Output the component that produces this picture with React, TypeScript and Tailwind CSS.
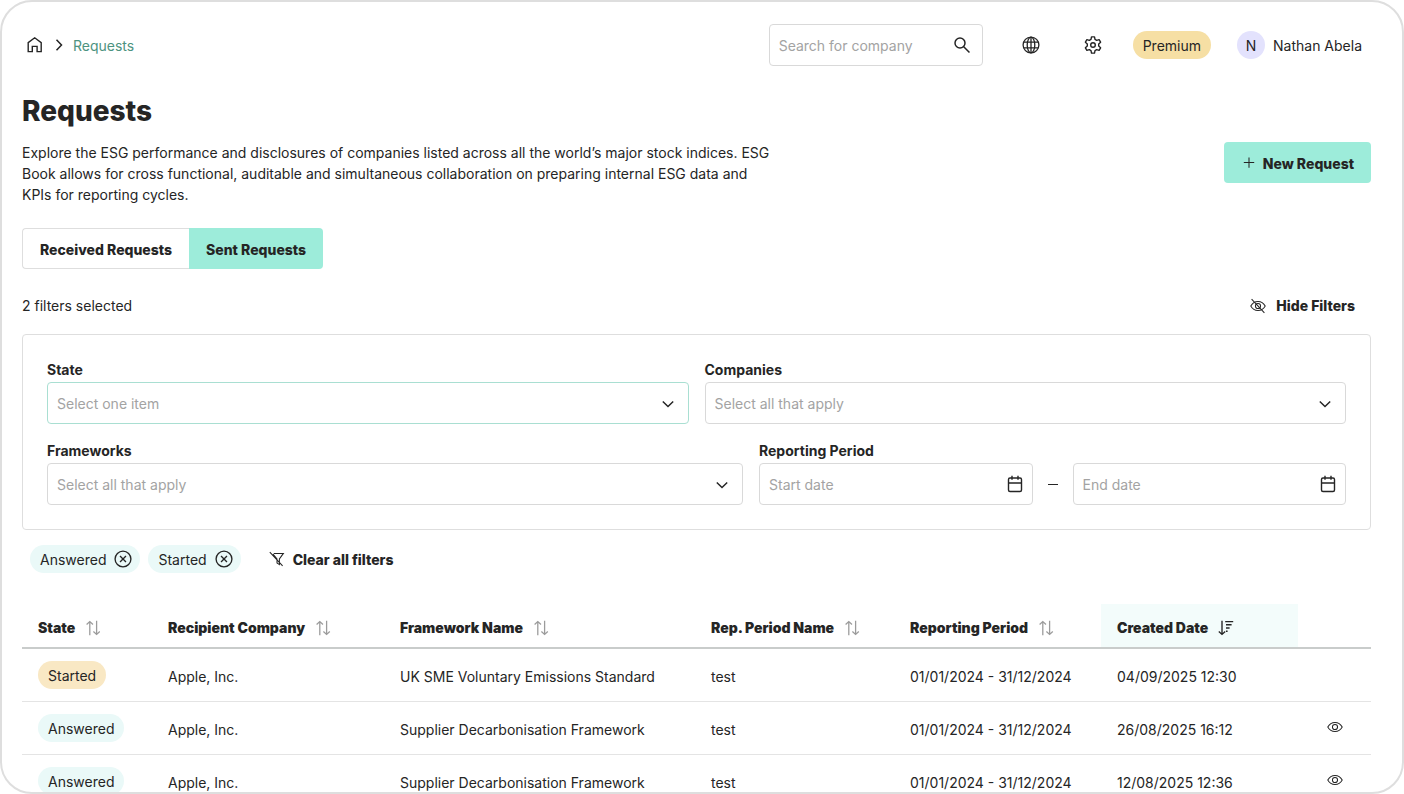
import type { ReactNode } from "react";
import clsx from "clsx";

type IconProps = { className?: string; size?: number; stroke?: number; children?: ReactNode };

function Icon({ className, size = 20, stroke = 1.3, children }: IconProps) {
  return (
    <svg
      className={clsx("shrink-0", className)}
      width={size}
      height={size}
      viewBox="0 0 20 20"
      fill="none"
      stroke="currentColor"
      strokeWidth={stroke}
      aria-hidden="true"
    >
      {children}
    </svg>
  );
}

function HomeIcon() {
  return (
    <Icon stroke={1.4}>
      <path d="M3.2 7.6 9.7 2.8l6.5 4.8v9h-4.1v-5.2H7.3v5.2H3.2z" />
    </Icon>
  );
}

function ChevronIcon({ className }: { className?: string }) {
  return (
    <Icon className={className} stroke={1.5}>
      <path d="m4.8 7.5 5.2 5 5.2-5" />
    </Icon>
  );
}

function GearIcon() {
  return (
    <Icon stroke={1.4}>
      <path
        strokeLinejoin="round"
        d="M8.5 1.9h3l.5 2.5 1.7 1 2.4-.8 1.5 2.6-1.9 1.7v2.2l1.9 1.7-1.5 2.6-2.4-.8-1.7 1-.5 2.5h-3L8 15.6l-1.700-1-2.400.8-1.500-2.600 1.900-1.700V8.900L2.400 7.200l1.500-2.600 2.400.8 1.700-1z"
      />
      <circle cx="10" cy="10" r="2.3" />
    </Icon>
  );
}

function GlobeIcon() {
  return (
    <Icon>
      <circle cx="10" cy="10" r="7.9" />
      <ellipse cx="10" cy="10" rx="3.8" ry="7.9" />
      <path d="M10 2v16M2.8 7.2h14.4M2.8 12.8h14.4" />
    </Icon>
  );
}

function CalendarIcon() {
  return (
    <Icon stroke={1.4}>
      <rect x="3.5" y="4" width="13" height="13.5" rx="1.5" />
      <path d="M3.5 9h13M7 1.8v4M13 1.8v4" />
    </Icon>
  );
}

function EyeIcon({ off = false }: { off?: boolean }) {
  return (
    <Icon size={16} stroke={1.3}>
      <path d="M1 10C3 6.3 6.2 4.3 10 4.3S17 6.3 19 10c-2 3.7-5.2 5.7-9 5.7S3 13.7 1 10z" />
      <circle cx="10" cy="10" r="3.2" />
      {off && <path d="m2 1.5 16 17" />}
    </Icon>
  );
}

function SortIcon() {
  return (
    <Icon size={16} className="text-[#9b9b9b]" stroke={1.6}>
      <path d="M6 19V2M2 5.5 6 2l4 3.5M14.500 1v17M10.500 14.500l4 3.500 4-3.500" />
    </Icon>
  );
}

function SortDescIcon() {
  return (
    <Icon size={16} stroke={1.7}>
      <path d="M5 1v17M1 14.5 5 18l4-3.5M9 2h10M10 6h7M10 10h4.5M10 14h2" />
    </Icon>
  );
}

type FieldProps = { id: string; label: string; placeholder: string; active?: boolean };

function SelectField({ id, label, placeholder, active }: FieldProps) {
  return (
    <div className="flex flex-1 flex-col">
      <label htmlFor={id} className="font-bold leading-6">{label}</label>
      <div className="relative">
        <select
          id={id}
          defaultValue=""
          className={clsx(
            "h-[42px] w-full appearance-none rounded border bg-white pl-[9px] pr-10 pt-[2px] text-[#a3a3a3]",
            active ? "border-[#a9dfd2]" : "border-[#d9d9d9]"
          )}
        >
          <option value="">{placeholder}</option>
        </select>
        <ChevronIcon className="pointer-events-none absolute right-[11px] top-3" />
      </div>
    </div>
  );
}

function DateField({ id, label, placeholder }: FieldProps) {
  return (
    <div className="flex h-[42px] min-w-0 flex-1 items-center rounded border border-[#d9d9d9] pl-[9px] pr-[7px]">
      <input
        id={id}
        aria-label={label}
        placeholder={placeholder}
        className="w-full min-w-0 pt-[2px] outline-none placeholder:text-[#a3a3a3]"
      />
      <CalendarIcon />
    </div>
  );
}

function FilterChip({ label }: { label: string }) {
  return (
    <span className="flex h-7 items-center gap-2 rounded-full bg-[#eaf9f8] pl-[10px] pr-2">
      <span className="pt-[2px]">{label}</span>
      <button type="button" aria-label={`Remove ${label}`}>
        <Icon size={18} stroke={1.5}>
          <circle cx="10" cy="10" r="8.8" />
          <path d="m6.7 6.7 6.6 6.6M13.3 6.7l-6.6 6.6" />
        </Icon>
      </button>
    </span>
  );
}

const columns = [
  { name: "State", width: "w-[130px]" },
  { name: "Recipient Company", width: "w-[232px]" },
  { name: "Framework Name", width: "w-[311px]" },
  { name: "Rep. Period Name", width: "w-[199px]" },
  { name: "Reporting Period", width: "w-[207px]" },
  { name: "Created Date", width: "w-[197px]", sorted: true },
];

const rows = [
  { state: "Started", framework: "UK SME Voluntary Emissions Standard", created: "04/09/2025 12:30" },
  { state: "Answered", framework: "Supplier Decarbonisation Framework", created: "26/08/2025 16:12", viewable: true },
  { state: "Answered", framework: "Supplier Decarbonisation Framework", created: "12/08/2025 12:36", viewable: true },
];

function TopBar() {
  return (
    <header className="flex h-[42px] items-center justify-between">
      <nav aria-label="Breadcrumb" className="flex items-center gap-1 pl-[3px]">
        <a href="#home" aria-label="Home"><HomeIcon /></a>
        <ChevronIcon className="-rotate-90" />
        <a href="#requests" className="pt-[2px] text-[#4d9380]">Requests</a>
      </nav>

      <div className="flex items-center">
        <div className="flex h-[42px] w-[214px] items-center rounded border border-[#d9d9d9] pl-[9px] pr-[10px]">
          <input
            aria-label="Search for company"
            placeholder="Search for company"
            className="w-full min-w-0 pt-[2px] outline-none placeholder:text-[#a3a3a3]"
          />
          <Icon stroke={1.5}>
            <circle cx="8" cy="8" r="5" />
            <path d="m11.500 11.500 6 6" />
          </Icon>
        </div>
        <button type="button" aria-label="Language" className="ml-[38px]"><GlobeIcon /></button>
        <button type="button" aria-label="Settings" className="ml-[42px]"><GearIcon /></button>
        <span className="ml-[30px] flex h-7 items-center rounded-full bg-[#f6dfa4] px-[10px] pt-[2px]">Premium</span>
        <button type="button" className="ml-[26px] flex items-center gap-2">
          <span className="flex size-7 items-center justify-center rounded-full bg-[#e3e2fd] pt-[2px]">N</span>
          <span className="pt-[2px]">Nathan Abela</span>
        </button>
      </div>
    </header>
  );
}

function Filters() {
  return (
    <section className="rounded border border-[#dedede] p-6 pt-[23px]">
      <div className="flex gap-4">
        <SelectField id="state" label="State" placeholder="Select one item" active />
        <SelectField id="companies" label="Companies" placeholder="Select all that apply" />
      </div>
      <div className="mt-[15px] flex gap-4">
        <div className="flex w-[696px] max-w-[54%]">
          <SelectField id="frameworks" label="Frameworks" placeholder="Select all that apply" />
        </div>
        <fieldset className="min-w-0 flex-1">
          <legend className="font-bold leading-6">Reporting Period</legend>
          <div className="flex items-center">
            <DateField id="start" label="Start date" placeholder="Start date" />
            <span className="mx-[15px] h-px w-[10px] bg-[#252525]" />
            <DateField id="end" label="End date" placeholder="End date" />
          </div>
        </fieldset>
      </div>
    </section>
  );
}

function RequestsTable() {
  return (
    <table className="w-full table-fixed border-collapse text-left">
      <thead>
        <tr className="h-11 border-b-2 border-[#c9cccb]">
          {columns.map((col) => (
            <th key={col.name} className={clsx("px-4 pt-1", col.width, col.sorted && "bg-[#f3fcfb]")}>
              <button type="button" className="flex items-center gap-[10px] whitespace-nowrap font-black">
                {col.name}
                {col.sorted ? <SortDescIcon /> : <SortIcon />}
              </button>
            </th>
          ))}
          <th aria-label="Actions" />
        </tr>
      </thead>
      <tbody>
        {rows.map((row) => (
          <tr key={row.created} className="h-[53px] border-b border-[#e4e4e4]">
            <td className="px-4">
              <span
                className={clsx(
                  "inline-flex h-7 items-center rounded-full px-[10px] pt-[2px]",
                  row.state === "Started" ? "bg-[#f9e8c4]" : "bg-[#eaf9f8]"
                )}
              >
                {row.state}
              </span>
            </td>
            <td className="px-4 pt-1">Apple, Inc.</td>
            <td className="whitespace-nowrap px-4 pt-1">{row.framework}</td>
            <td className="px-4 pt-1">test</td>
            <td className="whitespace-nowrap px-4 pt-1">01/01/2024 - 31/12/2024</td>
            <td className="whitespace-nowrap px-4 pt-1">{row.created}</td>
            <td className="pb-1 text-center">
              {row.viewable && (
                <button type="button" aria-label="View request" className="align-middle"><EyeIcon /></button>
              )}
            </td>
          </tr>
        ))}
      </tbody>
    </table>
  );
}

export default function App() {
  return (
    <div className="h-screen overflow-hidden rounded-[32px] border-2 border-[#dedede] bg-white font-['Inter','Liberation_Sans',sans-serif] text-sm text-[#252525]">
      <div className="pl-5 pr-[31px] pt-[22px]">
        <div className="pr-[9px]"><TopBar /></div>

        <h1 className="mt-[27px] text-[28px] font-extrabold leading-9">Requests</h1>
        <div className="mt-[13px] flex items-start justify-between">
          <p className="w-[750px] leading-[21px]">
            Explore the ESG performance and disclosures of companies listed across all the world’s major stock indices. ESG
            Book allows for cross functional, auditable and simultaneous collaboration on preparing internal ESG data and
            KPIs for reporting cycles.
          </p>
          <button type="button" className="flex h-[41px] items-center gap-[6px] rounded bg-[#9decda] px-[17px] font-extrabold">
            <Icon size={16}><path d="M10 3v13M3.500 9.500h13" /></Icon>
            <span className="pt-[2px]">New Request</span>
          </button>
        </div>

        <div className="mt-[23px] flex h-[41px]">
          <button type="button" className="rounded-l border border-r-0 border-[#dedede] px-[17px] pt-[2px] font-extrabold">
            Received Requests
          </button>
          <button type="button" className="rounded-r bg-[#9decda] px-[17px] pt-[2px] font-extrabold">Sent Requests</button>
        </div>

        <div className="mb-4 mt-[25px] flex h-6 items-center justify-between">
          <span>2 filters selected</span>
          <button type="button" className="mr-4 flex items-center gap-[10px] font-extrabold">
            <EyeIcon off />
            Hide Filters
          </button>
        </div>

        <Filters />

        <div className="mt-[15px] flex items-center gap-2 pl-2">
          <FilterChip label="Answered" />
          <FilterChip label="Started" />
          <button type="button" className="ml-5 flex items-center gap-2 font-extrabold">
            <Icon size={16}>
              <path d="M6 3h12l-5 7v7l-3-2v-5L5 4M1 1.500l16 17" />
            </Icon>
            <span className="pt-[2px]">Clear all filters</span>
          </button>
        </div>

        <div className="mt-[31px]"><RequestsTable /></div>
      </div>
    </div>
  );
}
